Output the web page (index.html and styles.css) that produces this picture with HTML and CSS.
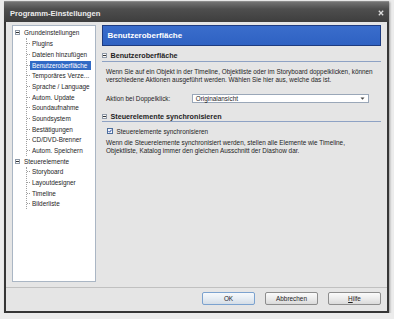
FILE: index.html
```html
<!DOCTYPE html>
<html lang="de">
<head>
<meta charset="utf-8">
<title>Programm-Einstellungen</title>
<link rel="stylesheet" href="styles.css">
</head>
<body>
<div class="window">
  <div class="titlebar">
    <span class="title">Programm-Einstellungen</span>
    <svg class="close" width="6" height="6" viewBox="0 0 6 6"><path d="M0.8 0.8 L5.2 5.2 M5.2 0.8 L0.8 5.2" stroke="#dcdcdc" stroke-width="1.3" fill="none"/></svg>
  </div>
  <div class="main">
    <div class="tree">
      <div class="root"><span class="exp"><span class="minus"></span></span>Grundeinstellungen</div>
      <ul class="children">
        <li><span class="conn"></span><span class="label">Plugins</span></li>
        <li><span class="conn"></span><span class="label">Dateien hinzufügen</span></li>
        <li><span class="conn"></span><span class="label selected">Benutzeroberfläche</span></li>
        <li><span class="conn"></span><span class="label">Temporäres Verze...</span></li>
        <li><span class="conn"></span><span class="label">Sprache / Language</span></li>
        <li><span class="conn"></span><span class="label">Autom. Update</span></li>
        <li><span class="conn"></span><span class="label">Soundaufnahme</span></li>
        <li><span class="conn"></span><span class="label">Soundsystem</span></li>
        <li><span class="conn"></span><span class="label">Bestätigungen</span></li>
        <li><span class="conn"></span><span class="label">CD/DVD-Brenner</span></li>
        <li><span class="conn"></span><span class="label">Autom. Speichern</span></li>
      </ul>
      <div class="root"><span class="exp"><span class="minus"></span></span>Steuerelemente</div>
      <ul class="children">
        <li><span class="conn"></span><span class="label">Storyboard</span></li>
        <li><span class="conn"></span><span class="label">Layoutdesigner</span></li>
        <li><span class="conn"></span><span class="label">Timeline</span></li>
        <li><span class="conn"></span><span class="label">Bilderliste</span></li>
      </ul>
    </div>
    <div class="panel">
      <div class="banner">Benutzeroberfläche</div>
      <div class="section-head first"><span class="exp"><span class="minus"></span></span>Benutzeroberfläche</div>
      <p class="desc first-desc">Wenn Sie auf ein Objekt in der Timeline, Objektliste oder im Storyboard doppelklicken, können<br>verschiedene Aktionen ausgeführt werden. Wählen Sie hier aus, welche das ist.</p>
      <div class="field">
        <span class="field-label">Aktion bei Doppelklick:</span>
        <div class="select">
          <span>Originalansicht</span>
          <svg width="5" height="3" viewBox="0 0 5 3"><path d="M0.5 0.5 L4.5 0.5 L2.5 2.7 Z" fill="#444"/></svg>
        </div>
      </div>
      <div class="section-head second"><span class="exp"><span class="minus"></span></span>Steuerelemente synchronisieren</div>
      <div class="check">
        <svg class="box" width="6" height="6" viewBox="0 0 6 6"><rect x="0.5" y="0.5" width="5" height="5" fill="#f4f6fa" stroke="#4d6e9c"/><path d="M1.5 3 L2.6 4.2 L4.6 1.7" stroke="#2346a0" stroke-width="1" fill="none"/></svg>
        <span>Steuerelemente synchronisieren</span>
      </div>
      <p class="desc second-desc">Wenn die Steuerelemente synchronisiert werden, stellen alle Elemente wie Timeline,<br>Objektliste, Katalog immer den gleichen Ausschnitt der Diashow dar.</p>
    </div>
  </div>
  <div class="footer">
    <button class="btn default">OK</button>
    <button class="btn">Abbrechen</button>
    <button class="btn"><u>H</u>ilfe</button>
  </div>
</div>
</body>
</html>
```
FILE: styles.css
```css
* {
  box-sizing: border-box;
  margin: 0;
  padding: 0;
}

body {
  background: #ececec;
  font-family: "Liberation Sans", Arial, sans-serif;
  font-size: 6.4px;
  color: #1e1e1e;
}

.window {
  margin: 1px 0 0 4px;
  width: 385px;
  height: 312px;
  display: flex;
  flex-direction: column;
  background: #e5e5e5;
  border: 2px solid #363636;
  border-top: 0;
  box-shadow: 1px 1px 2px rgba(0, 0, 0, 0.35);
}

.titlebar {
  height: 21px;
  margin: 0 -2px;
  padding: 2px 5px 0 6px;
  display: flex;
  align-items: center;
  justify-content: space-between;
  background: linear-gradient(#727272, #4e4e4e 35%, #3e3e3e);
  border-top: 1px solid #8a8a8a;
}

.title {
  color: #ececec;
  font-weight: bold;
  font-size: 7.6px;
  padding-top: 1px;
}

.close {
  display: block;
}

.main {
  flex: 1;
  display: flex;
  gap: 5.5px;
  padding: 3px 6px 5px 6px;
}

.tree {
  width: 84px;
  flex: none;
  background: #fff;
  border: 1px solid #aab6c4;
  padding-top: 1.6px;
}

.root {
  height: 10.7px;
  display: flex;
  align-items: center;
  padding-left: 2px;
  gap: 4px;
}

.exp {
  width: 5px;
  height: 5px;
  border: 1px solid #8f9aa8;
  background: #fdfdfd;
  display: flex;
  align-items: center;
  justify-content: center;
  flex: none;
}

.minus {
  width: 3px;
  height: 1px;
  background: #333;
}

.children {
  list-style: none;
  margin-left: 13px;
  border-left: 1px dotted #a0a0a0;
}

.children li {
  height: 10.7px;
  display: flex;
  align-items: center;
}

.conn {
  width: 3px;
  border-top: 1px dotted #a0a0a0;
}

.label {
  padding: 0 2px;
  height: 9px;
  line-height: 9px;
  white-space: nowrap;
}

.label.selected {
  background: #316ac5;
  color: #fff;
  padding-right: 4px;
}

.panel {
  flex: 1;
  display: flex;
  flex-direction: column;
}

.banner {
  height: 21px;
  background: linear-gradient(#3a6dcc, #2f62c2);
  border: 1px solid #1d3b80;
  color: #fff;
  font-weight: bold;
  font-size: 8px;
  line-height: 19px;
  padding-left: 5px;
}

.section-head {
  height: 11px;
  display: flex;
  align-items: center;
  gap: 3.5px;
  padding-left: 0.5px;
  border-bottom: 1px solid #8ea2c4;
  font-weight: bold;
  font-size: 7.2px;
}

.section-head.first {
  margin-top: 4.5px;
}

.section-head.second {
  margin-top: 8px;
}

.desc {
  padding-left: 4.5px;
  line-height: 8px;
  white-space: nowrap;
}

.first-desc {
  margin-top: 6.8px;
}

.second-desc {
  margin-top: 2.8px;
}

.field {
  margin-top: 9.5px;
  height: 9.5px;
  display: flex;
  align-items: center;
  padding-left: 4.5px;
}

.field-label {
  width: 85.7px;
  flex: none;
}

.select {
  width: 177.3px;
  height: 9.5px;
  background: #fff;
  border: 1px solid #9aa7b8;
  display: flex;
  align-items: center;
  justify-content: space-between;
  padding: 0 3px 0 3px;
}

.select svg {
  display: block;
}

.check {
  margin-top: 3.8px;
  height: 10px;
  display: flex;
  align-items: center;
  gap: 3.5px;
  padding-left: 5.5px;
}

.check .box {
  display: block;
}

.footer {
  height: 24px;
  flex: none;
  border-top: 1px solid #c0c0c0;
  padding: 4px 6px 0 6px;
  display: flex;
  justify-content: flex-end;
  align-items: flex-start;
  gap: 10px;
}

.btn {
  width: 53px;
  height: 13px;
  font-family: "Liberation Sans", Arial, sans-serif;
  font-size: 6.4px;
  color: #1e1e1e;
  background: linear-gradient(#fbfbfb, #ececec 50%, #dadada);
  border: 1px solid #8d8d8d;
  border-radius: 2px;
}

.btn.default {
  border-color: #7ba2cf;
  background: linear-gradient(#f6f9fc, #e6edf4 50%, #d5dde6);
}
```
